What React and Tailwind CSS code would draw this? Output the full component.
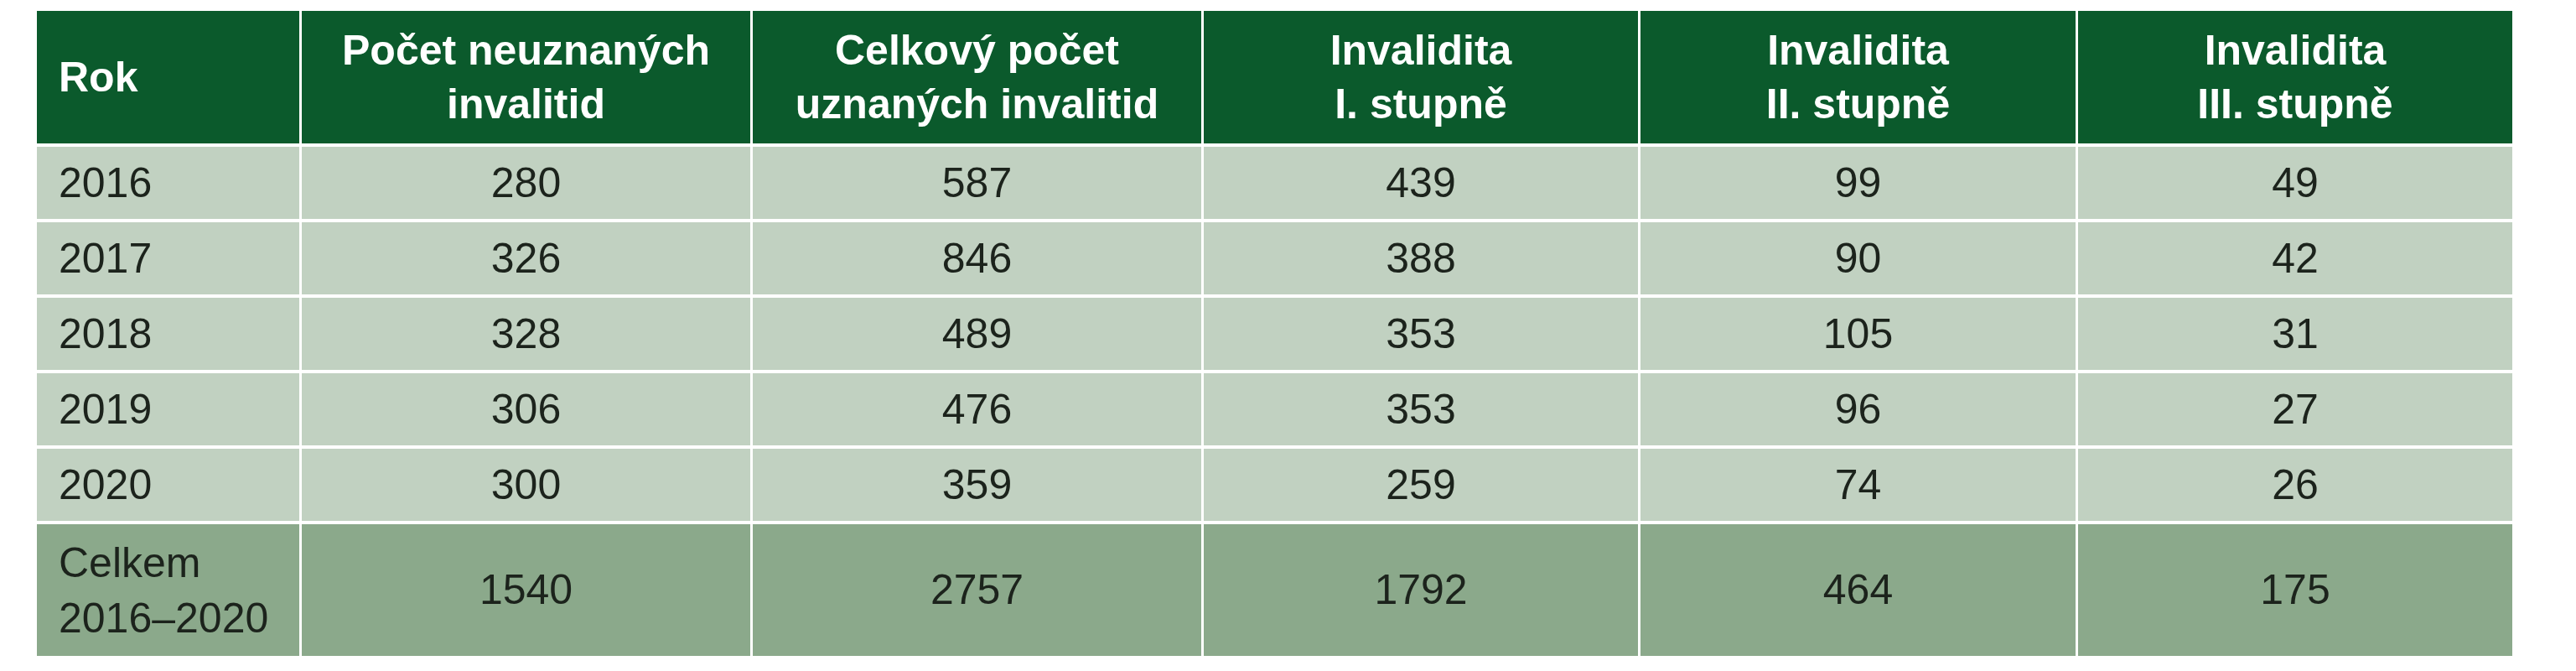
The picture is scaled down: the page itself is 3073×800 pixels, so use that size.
import React from "react";

const headers = [
  ["Rok"],
  ["Počet neuznaných", "invalitid"],
  ["Celkový počet", "uznaných invalitid"],
  ["Invalidita", "I. stupně"],
  ["Invalidita", "II. stupně"],
  ["Invalidita", "III. stupně"],
];

const rows = [
  ["2016", "280", "587", "439", "99", "49"],
  ["2017", "326", "846", "388", "90", "42"],
  ["2018", "328", "489", "353", "105", "31"],
  ["2019", "306", "476", "353", "96", "27"],
  ["2020", "300", "359", "259", "74", "26"],
];

const total = ["1540", "2757", "1792", "464", "175"];

export default function App() {
  return (
    <div
      className="w-[3073px] h-[800px] bg-white pt-[13px] pl-[44px]"
      style={{ fontFamily: '"Liberation Sans", Arial, sans-serif' }}
    >
      <div className="grid w-[2953px] grid-cols-[313px_535px_535px_518px_519px_518px] grid-rows-[158px_86px_86px_86px_86px_86px_157px] gap-x-[3px] gap-y-[4px] bg-white">
        {headers.map((h, i) => (
          <div
            key={i}
            className={
              "flex flex-col justify-center bg-[#0b5a2c] text-white font-bold text-[50px] leading-[64px] " +
              (i === 0 ? "items-start pl-[26px]" : "items-center text-center")
            }
          >
            {h.map((line, j) => (
              <span key={j}>{line}</span>
            ))}
          </div>
        ))}

        {rows.map((r, ri) =>
          r.map((cell, ci) => (
            <div
              key={ri + "-" + ci}
              className={
                "flex items-center bg-[#c1d1c1] text-[#1c231c] text-[50px] " +
                (ci === 0 ? "justify-start pl-[26px]" : "justify-center")
              }
            >
              {cell}
            </div>
          ))
        )}

        <div className="flex flex-col justify-center bg-[#8ba98b] text-[#1c231c] text-[50px] leading-[66px] pl-[26px]">
          <span>Celkem</span>
          <span>2016–2020</span>
        </div>
        {total.map((t, i) => (
          <div
            key={i}
            className="flex items-center justify-center bg-[#8ba98b] text-[#1c231c] text-[50px]"
          >
            {t}
          </div>
        ))}
      </div>
    </div>
  );
}
